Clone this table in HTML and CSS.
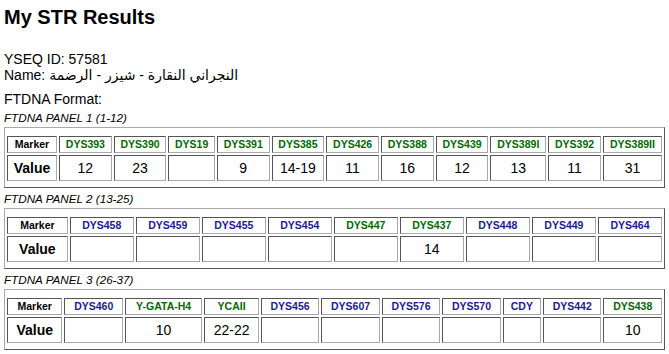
FILE: index.html
```html
<!DOCTYPE html>
<html>
<head>
<meta charset="utf-8">
<link rel="stylesheet" href="styles.css">
</head>
<body>
<h2 class="title">My STR Results</h2>
<p class="info">YSEQ ID: 57581<br>Name: النجراني النقارة - شيزر - الرضمة</p>
<p class="format">FTDNA Format:</p>

<div class="panel-label">FTDNA PANEL 1 (1-12)</div>
<div class="panel">
<table class="str">
<tr><th class="mk">Marker</th><th class="g">DYS393</th><th class="g">DYS390</th><th class="g">DYS19</th><th class="g">DYS391</th><th class="g">DYS385</th><th class="g">DYS426</th><th class="g">DYS388</th><th class="g">DYS439</th><th class="g">DYS389I</th><th class="g">DYS392</th><th class="g">DYS389II</th></tr>
<tr><td class="vl">Value</td><td>12</td><td>23</td><td></td><td>9</td><td>14-19</td><td>11</td><td>16</td><td>12</td><td>13</td><td>11</td><td>31</td></tr>
</table>
</div>

<div class="panel-label">FTDNA PANEL 2 (13-25)</div>
<div class="panel">
<table class="str">
<tr><th class="mk">Marker</th><th class="b">DYS458</th><th class="b">DYS459</th><th class="b">DYS455</th><th class="b">DYS454</th><th class="g">DYS447</th><th class="g">DYS437</th><th class="b">DYS448</th><th class="b">DYS449</th><th class="b">DYS464</th></tr>
<tr><td class="vl">Value</td><td></td><td></td><td></td><td></td><td></td><td>14</td><td></td><td></td><td></td></tr>
</table>
</div>

<div class="panel-label">FTDNA PANEL 3 (26-37)</div>
<div class="panel">
<table class="str">
<tr><th class="mk">Marker</th><th class="b">DYS460</th><th class="g">Y-GATA-H4</th><th class="g">YCAII</th><th class="b">DYS456</th><th class="b">DYS607</th><th class="b">DYS576</th><th class="b">DYS570</th><th class="b">CDY</th><th class="b">DYS442</th><th class="g">DYS438</th></tr>
<tr><td class="vl">Value</td><td></td><td>10</td><td>22-22</td><td></td><td></td><td></td><td></td><td></td><td></td><td>10</td></tr>
</table>
</div>
</body>
</html>
```

FILE: styles.css
```css
html, body {
  background: #ffffff;
}
body {
  margin: 4px;
  font-family: "Liberation Sans", Arial, "DejaVu Sans", sans-serif;
  font-size: 14px;
  line-height: 16px;
  color: #000;
}
.title {
  font-size: 20px;
  line-height: 23px;
  font-weight: bold;
  margin: 2px 0 22px;
}
.info {
  margin: 0;
}
.format {
  margin: 8px 0 0;
}
.panel-label {
  font-style: italic;
  font-size: 11.67px;
  line-height: 13px;
  margin: 4px 0 3px;
}
.panel {
  border: 1px solid;
  border-color: #a9a9a9 #555 #555 #a9a9a9;
  padding: 6px 0 4px;
}
.str {
  width: 100%;
  border-collapse: separate;
  border-spacing: 2px;
}
.str th, .str td {
  border: 1px solid;
  border-color: #555 #a9a9a9 #a9a9a9 #555;
  text-align: center;
}
.str th {
  font-size: 10.5px;
  line-height: 13px;
  font-weight: bold;
  padding: 1px 4px;
}
.str td {
  font-size: 14px;
  line-height: 16px;
  padding: 4px 4px;
}
.str .vl {
  font-weight: bold;
}
.str .mk {
  color: #000;
}
.str .g {
  color: #006b00;
}
.str .b {
  color: #1a1a99;
}
```
